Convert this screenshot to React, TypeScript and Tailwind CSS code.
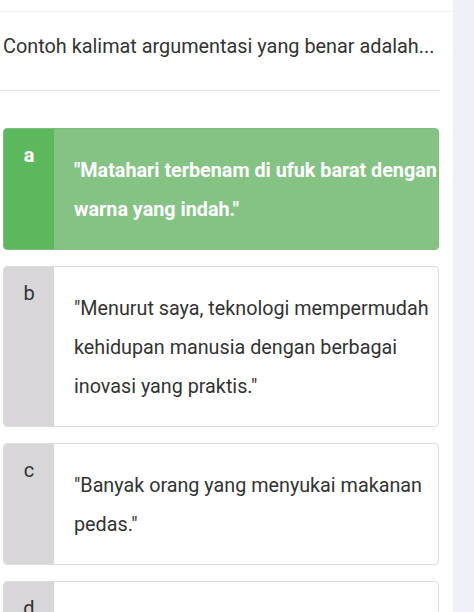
const options = [
  {
    key: "a",
    text: '"Matahari terbenam di ufuk barat dengan warna yang indah."',
    selected: true,
  },
  {
    key: "b",
    text: '"Menurut saya, teknologi mempermudah kehidupan manusia dengan berbagai inovasi yang praktis."',
    selected: false,
  },
  {
    key: "c",
    text: '"Banyak orang yang menyukai makanan pedas."',
    selected: false,
  },
  {
    key: "d",
    text: "",
    selected: false,
  },
];

export default function App() {
  return (
    <div
      className="flex h-[612px] w-[474px] overflow-hidden bg-white text-[#333333]"
      style={{ fontFamily: "Roboto, 'Noto Sans', sans-serif" }}
    >
      {/* Main column */}
      <div className="w-[453px] shrink-0 pt-[11px]">
        <div className="border-t border-[#f0f0f0]">
          <div className="pl-[3px] pt-[20px] pb-[28px]">
            <p className="text-[19.85px] leading-[30px]">
              Contoh kalimat argumentasi yang benar adalah...
            </p>
          </div>
          <div className="mr-[13px] border-t border-[#e6e6e6]" />

          <div className="flex flex-col gap-[16px] pl-[3px] pr-[14px] pt-[37px]">
            {options.map((opt) => (
              <div
                key={opt.key}
                className={`flex overflow-hidden rounded-[4px] border ${
                  opt.selected
                    ? "border-[#7dbf7d] bg-[#84c384]"
                    : "border-[#dcdcdc] bg-white"
                } ${opt.key === "d" ? "min-h-[120px]" : ""}`}
              >
                <div
                  className={`w-[50px] shrink-0 pt-[12px] text-center text-[20px] leading-7 ${
                    opt.selected
                      ? "bg-[#5cb85c] font-bold text-white"
                      : "bg-[#d8d6d9] text-[#333333]"
                  }`}
                >
                  {opt.key}
                </div>
                <div
                  className={`min-w-0 flex-1 pt-[22px] pb-[20px] pl-[20px] text-[19.75px] leading-[39px] ${
                    opt.selected
                      ? "-mr-[8px] font-bold text-white"
                      : "text-[#333333]"
                  }`}
                >
                  {opt.text}
                </div>
              </div>
            ))}
          </div>
        </div>
      </div>

      {/* Right strip */}
      <div className="flex-1 bg-[#eeeff7]" />
    </div>
  );
}
